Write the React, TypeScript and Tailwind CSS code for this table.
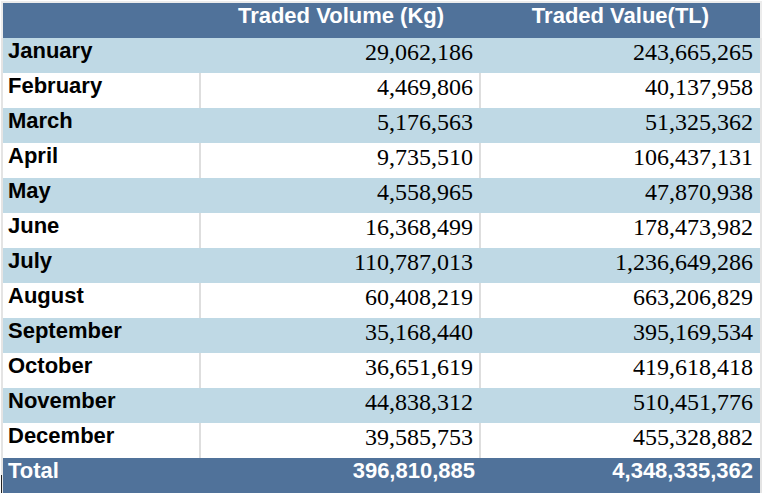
import React from "react";

const rows: [string, string, string][] = [
  ["January", "29,062,186", "243,665,265"],
  ["February", "4,469,806", "40,137,958"],
  ["March", "5,176,563", "51,325,362"],
  ["April", "9,735,510", "106,437,131"],
  ["May", "4,558,965", "47,870,938"],
  ["June", "16,368,499", "178,473,982"],
  ["July", "110,787,013", "1,236,649,286"],
  ["August", "60,408,219", "663,206,829"],
  ["September", "35,168,440", "395,169,534"],
  ["October", "36,651,619", "419,618,418"],
  ["November", "44,838,312", "510,451,776"],
  ["December", "39,585,753", "455,328,882"],
];

const sans = "font-['Liberation_Sans',Arial,sans-serif]";
const serif = "font-['Liberation_Serif','Times_New_Roman',serif]";

export default function App() {
  return (
    <div className="w-[768px] h-[500px] bg-white relative overflow-hidden">
      <div className="ml-[1px] mt-[1px] w-[761px] border-t-2 border-[#ececec]">
        {/* header */}
        <div className="flex h-[35px] bg-[#50729a] border-l-2 border-r-2 border-[#ececec]">
          <div className="w-[198px]" />
          <div className={`w-[280px] text-center text-white font-bold text-[22px] leading-[25px] ${sans}`}>
            Traded Volume (Kg)
          </div>
          <div className={`w-[279px] text-center text-white font-bold text-[22px] leading-[25px] ${sans}`}>
            Traded Value(TL)
          </div>
        </div>
        {rows.map(([m, v, t], i) => {
          const blue = i % 2 === 0;
          const bg = blue ? "bg-[#bfd9e5]" : "bg-white";
          const div = blue ? "border-[#bfd9e5]" : "border-[#dedede]";
          return (
            <div key={m} className={`flex h-[35px] ${bg} border-l-2 border-r-2 border-[#e4e4e4]`}>
              <div className={`w-[198px] pl-[5px] text-black font-bold text-[22px] leading-[25px] border-r-2 ${div} ${sans}`}>
                {m}
              </div>
              <div className={`w-[280px] pr-[6px] pt-[1px] text-right text-black text-[24px] leading-[27px] border-r-2 ${div} ${serif}`}>
                {v}
              </div>
              <div className={`w-[277px] pr-[5px] pt-[1px] text-right text-black text-[24px] leading-[27px] ${serif}`}>
                {t}
              </div>
            </div>
          );
        })}
        {/* total */}
        <div className={`flex h-[35px] bg-[#50729a] border-l-2 border-r-2 border-[#e4e4e4] text-white font-bold text-[22px] leading-[25px] ${sans}`}>
          <div className="w-[198px] pl-[5px]">Total</div>
          <div className="w-[280px] pr-[6px] text-right">396,810,885</div>
          <div className="w-[277px] pr-[5px] text-right">4,348,335,362</div>
        </div>
      </div>
      <div className="absolute left-[1px] top-[475px] w-[1px] h-[18px] bg-[#222]" />
    </div>
  );
}
